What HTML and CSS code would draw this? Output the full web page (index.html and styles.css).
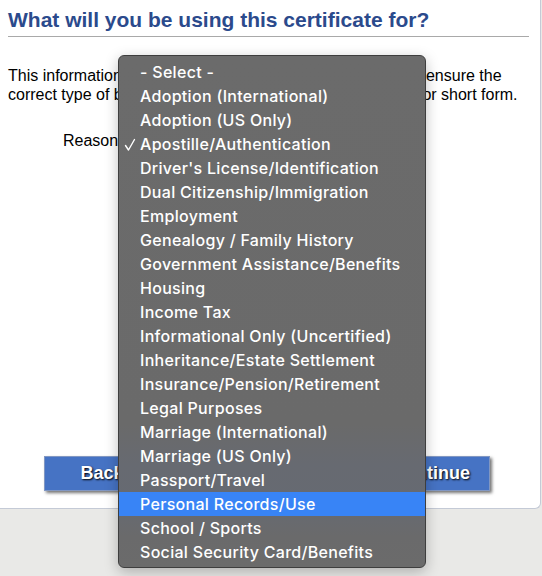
FILE: index.html
```html
<!DOCTYPE html>
<html>
	<head>
		<title>Certificate Purpose</title>
		<link rel="stylesheet" href="styles.css">
	</head>
	<body>
		<div class="page">
			<div class="card">
				<h3 class="title">What will you be using this certificate for?</h3>

				<p class="intro">This information is required by the vital statistics agency to ensure the correct type of birth certificate is issued, either a long form or short form.</p>

				<div class="field">
					<label for="reason">Reason:</label>
					<div id="reason" class="select-box">Apostille/Authentication</div>
				</div>

				<div class="actions">
					<button class="btn btn-back">Back</button>
					<button class="btn btn-continue">Continue</button>
				</div>
			</div>

			<!-- open native dropdown of the reason select -->
			<ul class="menu">
				<li>- Select -</li>
				<li>Adoption (International)</li>
				<li>Adoption (US Only)</li>
				<li class="checked">
					<svg class="check" width="12" height="14" viewBox="0 0 12 14"><polyline points="1.5,7.5 4.5,12 10.5,1.5" fill="none" stroke="#fff" stroke-width="1.4" stroke-linecap="round" stroke-linejoin="round"/></svg>
					Apostille/Authentication
				</li>
				<li>Driver's License/Identification</li>
				<li>Dual Citizenship/Immigration</li>
				<li>Employment</li>
				<li>Genealogy / Family History</li>
				<li>Government Assistance/Benefits</li>
				<li>Housing</li>
				<li>Income Tax</li>
				<li>Informational Only (Uncertified)</li>
				<li>Inheritance/Estate Settlement</li>
				<li>Insurance/Pension/Retirement</li>
				<li>Legal Purposes</li>
				<li>Marriage (International)</li>
				<li>Marriage (US Only)</li>
				<li>Passport/Travel</li>
				<li class="active">Personal Records/Use</li>
				<li>School / Sports</li>
				<li>Social Security Card/Benefits</li>
			</ul>
		</div>
	</body>
</html>
```

FILE: styles.css
```css
* {
	margin: 0;
	padding: 0;
	box-sizing: border-box;
}

body {
	font-family: "Liberation Sans", Arial, sans-serif;
	background: #e9e9e7;
	color: #000;
	width: 542px;
	height: 576px;
	overflow: hidden;
}

.page {
	position: relative;
	height: 576px;
}

.card {
	background: #fff;
	margin: 0 1px 0 -5px;
	padding: 8px 11px 17px 12px;
	border: 1px solid #c4cad6;
	border-top: none;
	border-radius: 0 0 6px 6px;
}

.title {
	font-size: 21px;
	line-height: 24px;
	font-weight: bold;
	color: #2b4a8c;
	padding-bottom: 4px;
	border-bottom: 1px solid #a9a9a9;
}

.intro {
	margin-top: 29px;
	font-size: 16px;
	line-height: 19px;
}

.field {
	display: flex;
	align-items: center;
	margin-top: 27px;
	padding-left: 55px;
	font-size: 16px;
	line-height: 19px;
}

.field label {
	width: 60px;
}

.select-box {
	width: 260px;
	height: 19px;
	font-size: 14px;
}

.actions {
	display: flex;
	justify-content: space-between;
	margin-top: 306px;
	padding: 0 39px 0 36px;
}

.btn {
	height: 35px;
	border: 1px solid #8197c2;
	background: #4673c4;
	color: #fff;
	font-family: "Liberation Sans", Arial, sans-serif;
	font-size: 18px;
	font-weight: bold;
	text-shadow: 1px 1px 2px #000;
	box-shadow: 2px 2px 3px rgba(0, 0, 0, 0.55);
}

.btn-back {
	width: 116px;
}

.btn-continue {
	width: 118px;
}

/* native popup menu */
.menu {
	position: absolute;
	left: 118px;
	top: 55px;
	width: 308px;
	height: 513px;
	list-style: none;
	padding: 4px 0 2px;
	background: linear-gradient(
		180deg,
		#6b6b6b 0%,
		#6a6a6a 72%,
		#676a71 80%,
		#666a72 88%,
		#6a6a6b 94%,
		#6b6b6b 100%
	);
	border: 1px solid #3e3e3e;
	border-radius: 6px;
	box-shadow: 0 4px 14px rgba(0, 0, 0, 0.25);
	font-family: Inter, "Liberation Sans", sans-serif;
	font-size: 16px;
	font-weight: 500;
	letter-spacing: 0.3px;
	color: #fff;
}

.menu li {
	position: relative;
	height: 24px;
	line-height: 24px;
	padding-left: 21px;
	white-space: nowrap;
}

.menu li.active {
	background: #3884f6;
}

.check {
	position: absolute;
	left: 5px;
	top: 6px;
}
```
